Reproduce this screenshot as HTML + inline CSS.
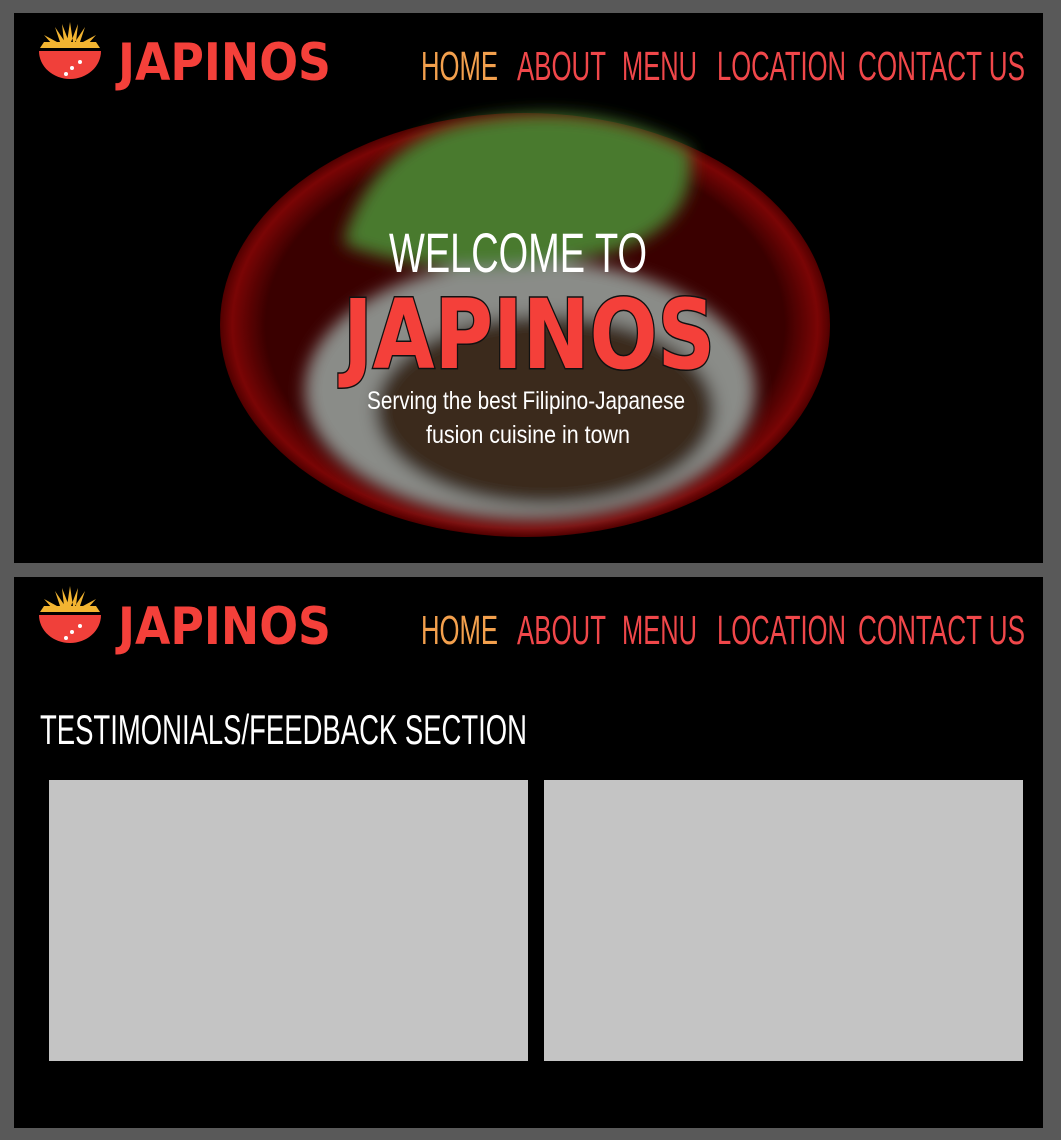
<!DOCTYPE html>
<html><head><meta charset="utf-8"><style>
html,body{margin:0;padding:0;background:#595959;width:1061px;height:1140px;overflow:hidden}
.p{position:absolute;left:14px;width:1029px;background:#000}
svg{position:absolute;left:0;top:0}
.box{position:absolute;top:780px;width:479px;height:281px;background:#c4c4c4}
</style></head><body>
<div class="p" style="top:13px;height:550px"></div>
<div class="p" style="top:577px;height:551px"></div>
<div class="box" style="left:49px"></div>
<div class="box" style="left:544px"></div>
<svg width="1061" height="1140" viewBox="0 0 1061 1140">
<defs>
<radialGradient id="bowl" cx="50%" cy="50%" r="50%">
<stop offset="0.85" stop-color="#3a0000"/><stop offset="0.96" stop-color="#7a0505"/><stop offset="1" stop-color="#500000"/>
</radialGradient>
<filter id="bl"><feGaussianBlur stdDeviation="8"/></filter>
<filter id="bl2"><feGaussianBlur stdDeviation="3"/></filter>
<g id="logo">
<g fill="#f2b431">
<path d="M40 48 L100 48 L96 42 L44 42 Z"/>
<path d="M70 22 L73 42 L67 42 Z M55 27 L65 42 L60 42 Z M85 27 L80 42 L75 42 Z M44 35 L57 42 L52 44 Z M96 35 L83 42 L88 44 Z M62 24 L69 42 L64 42Z M78 24 L71 42 L76 42Z"/>
</g>
<path d="M39 51 L101 51 A31 28 0 0 1 39 51 Z" fill="#f0403a"/>
<circle cx="72" cy="68" r="2" fill="#fff"/><circle cx="80" cy="62" r="2" fill="#fff"/><circle cx="66" cy="74" r="2" fill="#fff"/>
<text x="118" y="80" font-family="DejaVu Sans, sans-serif" font-weight="bold" font-size="52" fill="#f4403a" textLength="213" lengthAdjust="spacingAndGlyphs">JAPINOS</text>
</g>
<g id="nav" font-family="Liberation Sans, sans-serif" font-size="41" fill="#f0474a">
<text x="421" y="80" fill="#f3a04d" textLength="77" lengthAdjust="spacingAndGlyphs">HOME</text>
<text x="517" y="80" textLength="89" lengthAdjust="spacingAndGlyphs">ABOUT</text>
<text x="622" y="80" textLength="75" lengthAdjust="spacingAndGlyphs">MENU</text>
<text x="717" y="80" textLength="129" lengthAdjust="spacingAndGlyphs">LOCATION</text>
<text x="858" y="80" textLength="167" lengthAdjust="spacingAndGlyphs">CONTACT US</text>
</g>
</defs>
<ellipse cx="525" cy="325" rx="305" ry="212" fill="url(#bowl)"/>
<g filter="url(#bl)">
<ellipse cx="530" cy="390" rx="225" ry="130" fill="#8a8c88"/>
<ellipse cx="545" cy="410" rx="170" ry="95" fill="#3a2c1c"/>
<path d="M345 235 Q380 135 480 120 Q600 100 690 150 Q700 230 600 255 Q450 285 345 245 Z" fill="#4a7a2e"/>
</g>
<use href="#logo"/>
<use href="#nav"/>
<g transform="translate(0,564)"><use href="#logo"/><use href="#nav"/></g>
<text x="518" y="272" text-anchor="middle" font-family="Liberation Sans Narrow, Liberation Sans, sans-serif" font-size="56" fill="#fff" textLength="258" lengthAdjust="spacingAndGlyphs">WELCOME TO</text>
<text x="343" y="368" font-family="DejaVu Sans, sans-serif" font-weight="bold" font-size="96" fill="#f4403a" stroke="#111" stroke-width="3" paint-order="stroke" textLength="372" lengthAdjust="spacingAndGlyphs">JAPINOS</text>
<text x="526" y="409" text-anchor="middle" font-family="Liberation Sans, sans-serif" font-size="25" fill="#fff" textLength="318" lengthAdjust="spacingAndGlyphs">Serving the best Filipino-Japanese</text>
<text x="528" y="443" text-anchor="middle" font-family="Liberation Sans, sans-serif" font-size="25" fill="#fff" textLength="204" lengthAdjust="spacingAndGlyphs">fusion cuisine in town</text>
<text x="40" y="744" font-family="Liberation Sans, sans-serif" font-size="42" fill="#fff" textLength="487" lengthAdjust="spacingAndGlyphs">TESTIMONIALS/FEEDBACK SECTION</text>
</svg>
</body></html>
